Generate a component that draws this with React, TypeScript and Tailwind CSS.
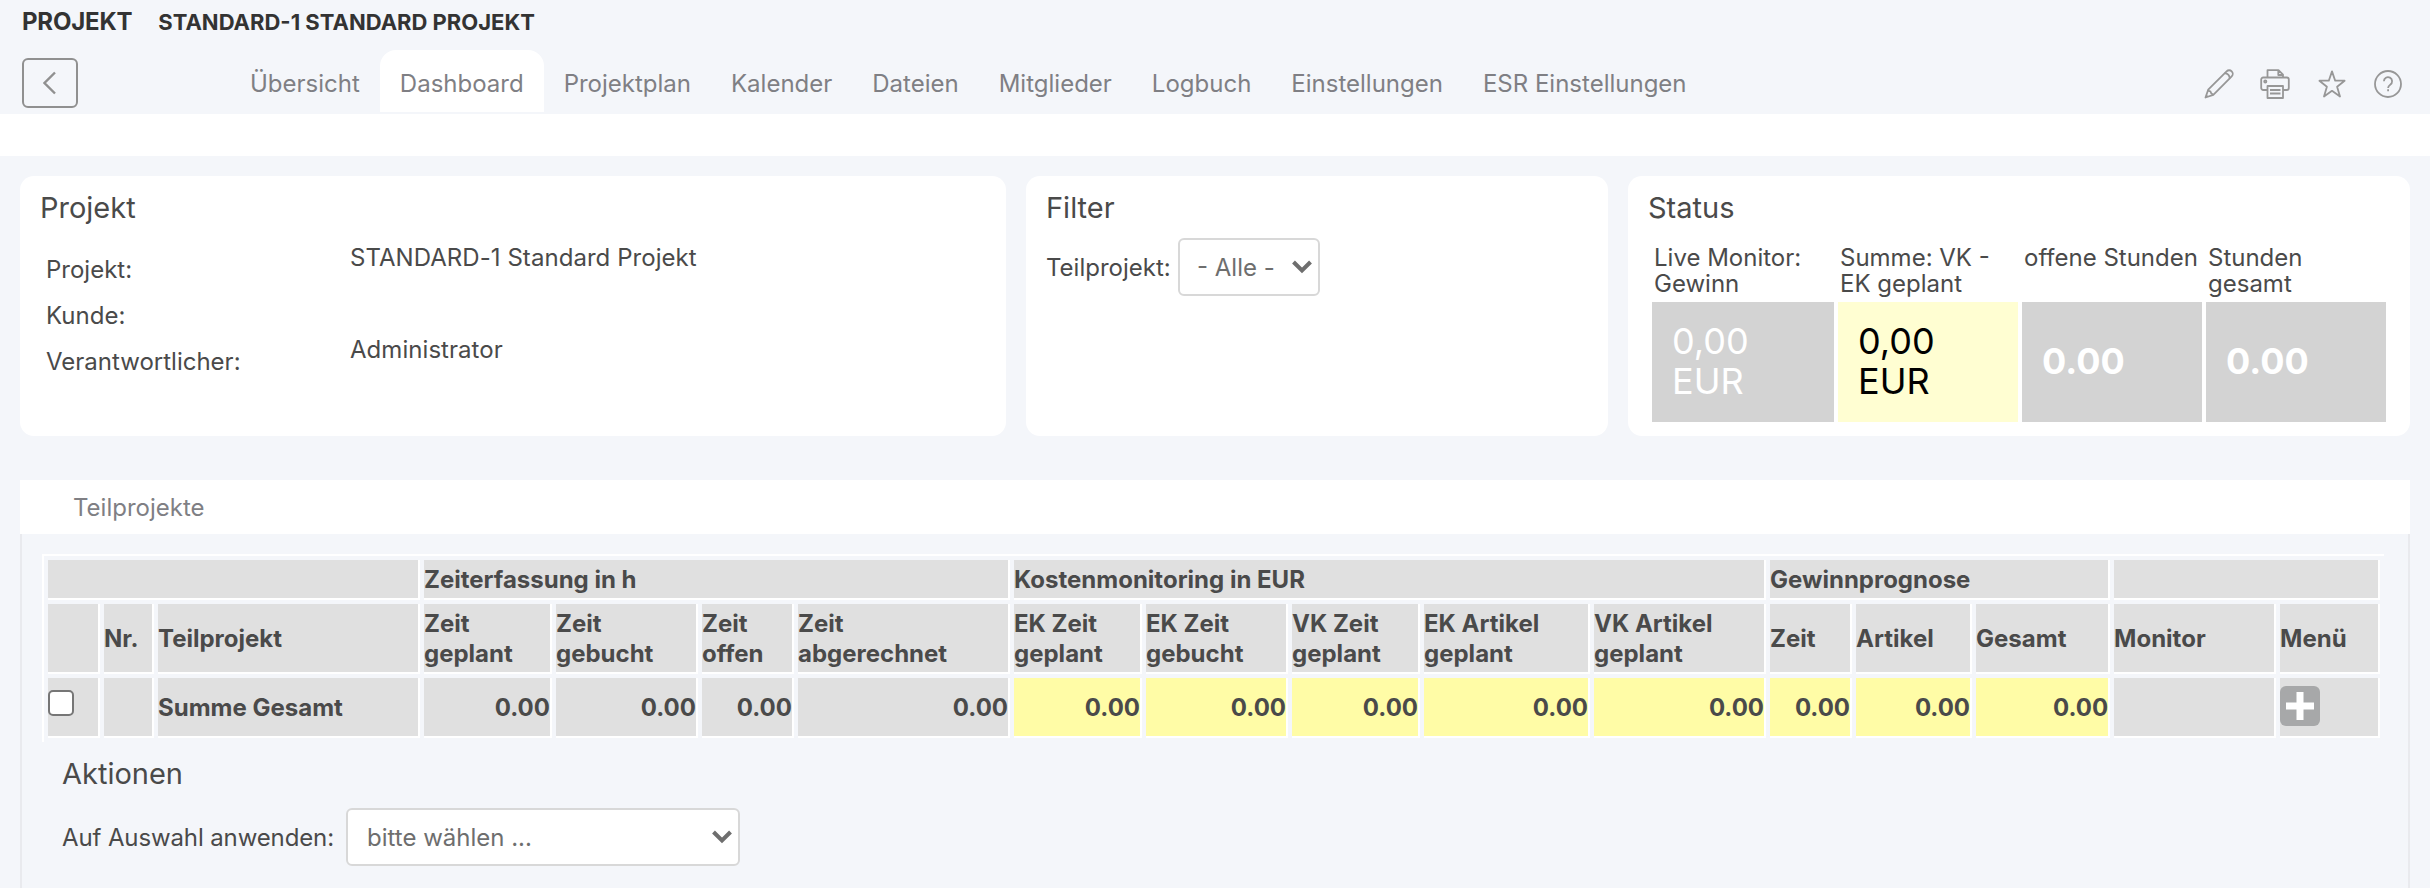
import type { ReactNode } from "react";

const tabs = [
  "Übersicht",
  "Dashboard",
  "Projektplan",
  "Kalender",
  "Dateien",
  "Mitglieder",
  "Logbuch",
  "Einstellungen",
  "ESR Einstellungen",
];

const columns = [
  { label: "", width: 52, kind: "check" },
  { label: "Nr.", width: 50, kind: "empty" },
  { label: "Teilprojekt", width: 262, kind: "name" },
  { label: "Zeit\ngeplant", width: 128, kind: "value" },
  { label: "Zeit\ngebucht", width: 142, kind: "value" },
  { label: "Zeit\noffen", width: 92, kind: "value" },
  { label: "Zeit\nabgerechnet", width: 212, kind: "value" },
  { label: "EK Zeit\ngeplant", width: 128, kind: "money" },
  { label: "EK Zeit\ngebucht", width: 142, kind: "money" },
  { label: "VK Zeit\ngeplant", width: 128, kind: "money" },
  { label: "EK Artikel\ngeplant", width: 166, kind: "money" },
  { label: "VK Artikel\ngeplant", width: 172, kind: "money" },
  { label: "Zeit", width: 82, kind: "money" },
  { label: "Artikel", width: 116, kind: "money" },
  { label: "Gesamt", width: 134, kind: "money" },
  { label: "Monitor", width: 162, kind: "empty" },
  { label: "Menü", width: 100, kind: "menu" },
];

const groups = [
  { label: "", span: 3 },
  { label: "Zeiterfassung in h", span: 4 },
  { label: "Kostenmonitoring in EUR", span: 5 },
  { label: "Gewinnprognose", span: 3 },
  { label: "", span: 2 },
];

function PencilIcon() {
  return (
    <svg width="30" height="30" viewBox="0 0 30 30" fill="none" stroke="#979797" strokeWidth="1.8" strokeLinejoin="round">
      <path d="M1.500 28.500l2.700-7.800L22.600 2.300a3.500 3.500 0 0 1 5.100 5.100L9.300 25.800z" />
      <path d="M20.600 4.200c2.800.3 4.900 2.400 5.200 5.200M4.200 20.700c.3 1.200 1 1.700 2.200 1.600.1 1.700.7 2.400 2.900 3.500" />
      <path d="M1.500 28.500l1-3 2 2z" fill="#979797" stroke="none" />
    </svg>
  );
}

function PrinterIcon() {
  return (
    <svg width="30" height="30" viewBox="0 0 30 30" fill="none" stroke="#979797" strokeWidth="1.8" strokeLinejoin="round">
      <path d="M7.500 8.500V1.200h11l4.500 4.500v2.800M18.300 1.200v4.800H23" />
      <path d="M7.500 21H3.200A2 2 0 0 1 1.200 19v-8.500a2 2 0 0 1 2-2h23.600a2 2 0 0 1 2 2V19a2 2 0 0 1-2 2H23" />
      <path d="M7.500 17H23v12H7.500zM10 21h10.500M10 24.500h10.500" />
      <circle cx="5.300" cy="12.500" r="1.100" />
    </svg>
  );
}

function StarIcon() {
  return (
    <svg width="28" height="28" viewBox="0 0 28 28" fill="none" stroke="#979797" strokeWidth="1.8" strokeLinejoin="round">
      <path d="M14 1.400l3.200 9.300h9.400l-7.500 6 2.900 9.800-8-5.700-8 5.700 2.900-9.800-7.500-6h9.400z" />
    </svg>
  );
}

function HelpIcon() {
  return (
    <svg width="28" height="28" viewBox="0 0 28 28" fill="none" stroke="#979797" strokeWidth="1.8">
      <circle cx="14" cy="14" r="13" />
      <path d="M9.900 11.300a4.100 4.100 0 1 1 6.300 3.400c-1.500 1-2.100 1.600-2.100 3.400M14.100 19.300v1.900" />
    </svg>
  );
}

function Caret({ className }: { className: string }) {
  return (
    <svg className={className} width="20" height="14" viewBox="0 0 20 14" fill="none" stroke="#6e6e6e" strokeWidth="4">
      <path d="M1.500 2l8.500 8.500L18.500 2" />
    </svg>
  );
}

function Card({ title, className, children }: { title: string; className: string; children: ReactNode }) {
  return (
    <section className={`h-[260px] rounded-[14px] bg-white px-5 pt-[13px] ${className}`}>
      <h2 className="text-[29px] leading-[37px]">{title}</h2>
      {children}
    </section>
  );
}

function StatusTile({ label, value, className }: { label: string; value: string; className: string }) {
  return (
    <div className="flex flex-1 flex-col first:flex-none first:basis-[182px]">
      <div className="h-[58px] pl-[2px] pt-px text-2xl leading-[26px]">{label}</div>
      <div className={`flex h-[120px] items-center px-5 pb-[2px] text-4xl leading-10 ${className}`}>
        <span className="w-[80px]">{value}</span>
      </div>
    </div>
  );
}

function SummaryCell({ kind }: { kind: string }) {
  const base = "h-[60px] border-b-2 border-r-2 border-white p-0 align-middle";
  if (kind === "value") return <td className={`${base} bg-[#e0e0e0] pt-[2px] text-right`}>0.00</td>;
  if (kind === "money") return <td className={`${base} bg-[#fffca6] pt-[2px] text-right`}>0.00</td>;
  return (
    <td className={`${base} bg-[#e0e0e0]`}>
      {kind === "name" && <div className="pt-[2px]">Summe Gesamt</div>}
      {kind === "check" && (
        <div className="mb-2 size-[26px] rounded-[5px] border-2 border-[#767676] bg-white" />
      )}
      {kind === "menu" && (
        <div className="mb-[2px] flex size-10 items-center justify-center rounded-md bg-[#a7a8a9]">
          <svg width="28" height="28" viewBox="0 0 28 28" stroke="#fff" strokeWidth="7">
            <path d="M14 0v28M0 14h28" />
          </svg>
        </div>
      )}
    </td>
  );
}

export default function App() {
  return (
    <div className="h-[888px] w-[2430px] overflow-hidden bg-[#f4f6fa] font-['Inter',sans-serif] text-2xl text-[#4a4a4a]">
      <header className="h-[114px]">
        <div className="flex h-[50px] items-baseline gap-[26px] pl-[22px] pt-[6px] font-bold leading-8 text-[#333]">
          <span className="text-2xl leading-8 tracking-[-0.2px]">PROJEKT</span>
          <span className="text-[22px] leading-8">STANDARD-1 STANDARD PROJEKT</span>
        </div>
        <div className="flex h-16 items-start pl-[22px]">
          <button className="mt-2 flex h-[50px] w-14 items-center justify-center rounded-md border-2 border-[#909090]">
            <svg width="14" height="24" viewBox="0 0 14 24" fill="none" stroke="#909090" strokeWidth="2.4">
              <path d="M12 1.500L1.500 12 12 22.500" />
            </svg>
          </button>
          <nav className="ml-[152px] flex text-[#7f7f84]">
            {tabs.map((tab) => (
              <a
                key={tab}
                className={`h-[62px] rounded-t-2xl px-5 pt-[18px] leading-8 ${tab === "Dashboard" ? "bg-white" : ""}`}
              >
                {tab}
              </a>
            ))}
          </nav>
          <div className="ml-auto mr-[28px] mt-[19px] flex h-[30px] items-center">
            <PencilIcon />
            <span className="w-[26px]" />
            <PrinterIcon />
            <span className="w-[28px]" />
            <StarIcon />
            <span className="w-[28px]" />
            <HelpIcon />
          </div>
        </div>
      </header>
      <div className="h-[42px] bg-white" />

      <main className="px-5 pt-5">
        <div className="flex gap-5">
          <Card title="Projekt" className="w-[986px]">
            <dl className="mt-[17px] grid grid-cols-[304px_1fr] pl-[6px] leading-[30px]">
              <dt className="h-[46px] pt-3">Projekt:</dt>
              <dd className="tracking-[0.05px]">STANDARD-1 Standard Projekt</dd>
              <dt className="h-[46px] pt-3">Kunde:</dt>
              <dd />
              <dt className="h-[46px] pt-3">Verantwortlicher:</dt>
              <dd className="tracking-[0.05px]">Administrator</dd>
            </dl>
          </Card>
          <Card title="Filter" className="w-[582px]">
            <div className="mt-3 flex items-center">
              <span className="w-[132px] pt-[2px]">Teilprojekt:</span>
              <button className="relative h-[58px] w-[142px] rounded-md border-2 border-[#d8d8d8] bg-white pl-[17px] text-left text-[#6e6e6e]">
                <span className="block pt-[2px]">- Alle -</span>
                <Caret className="absolute right-[6px] top-[20px]" />
              </button>
            </div>
          </Card>
          <Card title="Status" className="w-[782px]">
            <div className="ml-1 mr-1 mt-[18px] flex gap-1">
              <StatusTile label="Live Monitor: Gewinn" value="0,00 EUR" className="bg-[#d3d3d3] text-white" />
              <StatusTile label="Summe: VK - EK geplant" value="0,00 EUR" className="bg-[#fffed2] text-black" />
              <StatusTile label="offene Stunden" value="0.00" className="bg-[#d3d3d3] font-bold text-white" />
              <StatusTile label="Stunden gesamt" value="0.00" className="bg-[#d3d3d3] font-bold text-white" />
            </div>
          </Card>
        </div>

        <section className="mt-11">
          <div className="h-[54px] bg-white pl-[53px] pt-[13px] leading-[30px] text-[#7f7f84]">Teilprojekte</div>
          <div className="h-[354px] border-x-2 border-[#e9eaee] pl-5 pt-5">
            <table className="w-[2342px] table-fixed border-separate border-spacing-1 border-l-2 border-t-2 border-white text-left font-bold leading-[30px]">
              <colgroup>
                {columns.map((column, i) => (
                  <col key={i} style={{ width: column.width }} />
                ))}
              </colgroup>
              <thead>
                <tr>
                  {groups.map((group, i) => (
                    <th key={i} colSpan={group.span} className="h-10 border-b-2 border-r-2 border-white bg-[#e0e0e0] p-0 pt-[2px]">
                      {group.label}
                    </th>
                  ))}
                </tr>
                <tr>
                  {columns.map((column, i) => (
                    <th
                      key={i}
                      className="h-[70px] whitespace-pre-line border-b-2 border-r-2 border-white bg-[#e0e0e0] p-0 pt-px align-middle"
                    >
                      {column.label}
                    </th>
                  ))}
                </tr>
              </thead>
              <tbody>
                <tr>
                  {columns.map((column, i) => (
                    <SummaryCell key={i} kind={column.kind} />
                  ))}
                </tr>
              </tbody>
            </table>
            <h2 className="ml-5 mt-[13px] text-[29px] leading-[37px]">Aktionen</h2>
            <div className="ml-5 mt-4 flex items-center">
              <span className="w-[284px] pt-[2px] tracking-[-0.12px]">Auf Auswahl anwenden:</span>
              <button className="relative h-[58px] w-[394px] rounded-md border-2 border-[#d8d8d8] bg-white pl-[19px] text-left text-[#6e6e6e]">
                <span className="block pt-[2px]">bitte wählen ...</span>
                <Caret className="absolute right-[6px] top-[20px]" />
              </button>
            </div>
          </div>
        </section>
      </main>
    </div>
  );
}
